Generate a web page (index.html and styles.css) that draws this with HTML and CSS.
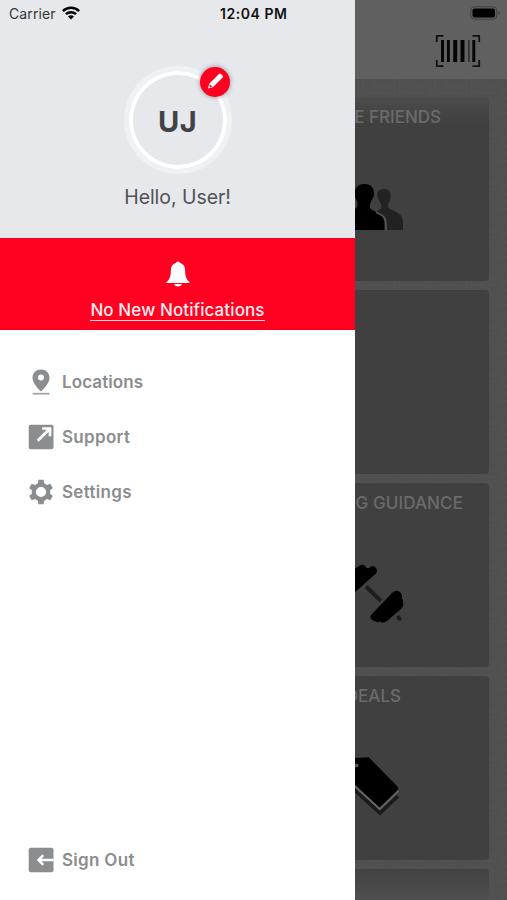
FILE: index.html
```
<!DOCTYPE html>
<html lang="en">
<head>
<meta charset="utf-8">
<title>Menu</title>
<link rel="stylesheet" href="styles.css">
</head>
<body>
<div class="app">
  <aside class="drawer">
    <header class="profile">
      <div class="status">
        <span class="carrier">Carrier</span>
        <svg class="wifi" width="18" height="14" viewBox="0 0 18 14"><g fill="none" stroke="#050505" stroke-width="2.5"><path d="M.9 5.1C5.3.7 12.7.7 17.1 5.1"/><path d="M3.9 8.2C6.8 5.5 11.2 5.5 14.1 8.2"/></g><path d="M6 10.4C7.7 8.9 10.3 8.9 12 10.4L9 13.5Z" fill="#050505"/></svg>
        <span class="clock">12:04 PM</span>
      </div>
      <div class="avatar">
        <span class="initials">UJ</span>
        <span class="edit"><svg width="30" height="30" viewBox="0 0 30 30"><path fill="#fff" d="M8 21.5L9.2 16.8L19 7Q20 6 21 7L22.8 8.8Q23.6 9.7 22.7 10.6L12.8 20.2Z"/><path d="M9.8 17.3L12.3 19.8L10.2 20.3L9.3 19.4Z" fill="#ff0020"/></svg></span>
      </div>
      <p class="hello">Hello, User!</p>
    </header>
    <section class="notice">
      <svg width="24" height="26" viewBox="0 0 24 26"><path fill="#fff" d="M12 .4Q13.8.4 14.2 2.1C18 3.2 19 6 19.1 9.5C19.2 15.5 20.3 18.1 23.7 21.4V22H.3V21.4C3.7 18.1 4.800 15.5 4.900 9.500C5 6 6 3.200 9.800 2.100Q10.200.4 12 .4ZM8 23H16Q15 25.500 12 25.500Q9 25.500 8 23Z"/></svg>
      <a class="noticeLink">No New Notifications</a>
    </section>
    <nav class="menu">
      <a class="item"><svg width="26" height="26" viewBox="0 0 26 26"><path fill="#8b8d8e" fill-rule="evenodd" d="M13 .5C17.8.5 21.500 4 21.500 8.700C21.500 14 16.500 19 13 22.500C9.500 19 4.500 14 4.500 8.700C4.500 4 8.200.5 13 .5ZM13 5.500A3 3 0 1 0 13 11.500A3 3 0 1 0 13 5.500Z"/><path d="M4.700 24.700H21.500" stroke="#a0a2a3" stroke-width="1.700"/></svg><span class="loc">Locations</span></a>
      <a class="item"><svg width="26" height="26" viewBox="0 0 26 26"><rect x=".7" y=".7" width="24.800" height="24.600" rx="2" fill="#8b8d8e"/><path d="M9.700 16.800L21.500 5M14.200 4.500H22V12.300" fill="none" stroke="#fff" stroke-width="2.700"/></svg><span class="sup">Support</span></a>
      <a class="item"><svg width="26" height="26" viewBox="0 0 26 26"><g fill="#8b8d8e"><path id="tooth" d="M9.500 6L10.500.8H15.500L16.500 6Z"/><use href="#tooth" transform="rotate(60 13 13)"/><use href="#tooth" transform="rotate(120 13 13)"/><use href="#tooth" transform="rotate(180 13 13)"/><use href="#tooth" transform="rotate(240 13 13)"/><use href="#tooth" transform="rotate(300 13 13)"/></g><circle cx="13" cy="13" r="7.200" fill="#fff" stroke="#8b8d8e" stroke-width="4.200"/></svg><span class="set">Settings</span></a>
      <a class="item signout"><svg width="26" height="26" viewBox="0 0 26 26"><rect x=".7" y=".7" width="24.800" height="24.600" rx="2" fill="#8b8d8e"/><path d="M25.500 13H11M15.300 8.200L10.500 13L15.300 17.800" fill="none" stroke="#fff" stroke-width="2.400"/></svg><span class="out">Sign Out</span></a>
    </nav>
  </aside>
  <main class="behind">
    <header class="topbar">
      <svg class="battery" width="31" height="14" viewBox="0 0 31 14"><rect x=".8" y=".8" width="26" height="12.400" rx="3.500" fill="none" stroke="#414141"/><rect x="2.500" y="2.500" width="22.500" height="9" rx="2" fill="#000"/><path d="M28.500 5Q31 7 28.500 9Z" fill="#414141"/></svg>
      <svg class="barcode" width="46" height="34" viewBox="0 0 46 34"><path d="M1.800 8V1.800H8.500M37.500 1.800H44.200V8M44.200 26V32.200H37.500M8.500 32.200H1.800V26" fill="none" stroke="#111" stroke-width="1.800"/><g fill="#050505"><path d="M6 6h3v22H6zM12 6h2.800v22H12zM18.200 6h4v22h-4zM25.500 6h4v22h-4zM37.300 6h3v22h-3z"/><path d="M33 6h1.800v22H33z" fill="#333"/></g></svg>
    </header>
    <div class="tiles">
      <svg class="texture" width="152" height="821"><defs><pattern id="grain" width="36" height="48" patternUnits="userSpaceOnUse"><path d="M3 0V13Q3 20 10 20H23Q30 20 30 28V48M8 0V9Q8 14 15 14H36M0 27H12Q20 27 20 35V48M0 34H8Q14 34 14 40V48M19 0V7H36M25 48V34Q25 27 19 26" fill="none" stroke="#595959" stroke-width="1"/></pattern></defs><rect width="152" height="821" fill="url(#grain)" opacity=".4"/></svg>
      <article class="tile first"><h2 class="friends">E FRIENDS</h2>
        <svg width="50" height="50" viewBox="0 0 50 50"><path fill="#222" d="M29 5C36 5 37.500 12 34 18C32 22 33 24 36 25.500C43 29 47.500 30 48 38V46H32Q32 34 27 31L22 27C28 24 27 22 25 18C20 11 22 5 29 5Z"/><path fill="#000" d="M9.500 0C19 0 21 9 17 16C14 21 14 24 17 26C23 29 29.500 30 29.500 40V46H-5V25H0Q4 23 2 17C-3 9 0 0 9.500 0Z"/><path d="M21 28.500C27 30.500 31 33 31 40V46" fill="none" stroke="#555" stroke-width="1.500"/></svg>
      </article>
      <article class="tile"></article>
      <article class="tile"><h2 class="guidance">G GUIDANCE</h2>
        <svg class="weights" width="50" height="64" viewBox="0 0 50 64"><path d="M11 24.500L26 39" stroke="#1d1d1d" stroke-width="4"/><path d="M41.500 54.500L44 53L47 56.500L45.500 59L42 57.500Z" fill="#1d1d1d"/><path d="M-2 8L4 4Q8 1 11 5Q12 7 14 6Q18 2 21 6Q23 9 20.500 12L-2 32ZM16 53L37 31Q41 27 45 30Q48 33 46.500 36Q49 38 48 41Q49 44 46 47L32 59Q28 62 25 59.500Q22 61 19 59Q14 57 16 53Z"/></svg>
      </article>
      <article class="tile"><h2 class="deals">DEALS</h2>
        <svg class="tags" width="50" height="62" viewBox="0 0 50 62"><path d="M-2 31.500L25 56L43 39" fill="none" stroke="#1a1a1a" stroke-width="3.500"/><path d="M-2 27.500L24.700 52L43.500 34" fill="none" stroke="#666" stroke-width="1.700"/><path d="M-2 1L13.700.3L42.500 29.500Q44 31.300 42.500 33L24.700 50.500L-2 26Z"/><path d="M-1 8.500H2" stroke="#555" stroke-width="3.500" stroke-linecap="round"/></svg>
      </article>
      <article class="tile last"></article>
    </div>
  </main>
</div>
</body>
</html>
```
FILE: styles.css
```
* { box-sizing: border-box; }
body { margin: 0; font-family: Inter, "Liberation Sans", sans-serif; }
svg { display: block; flex: none; }
.app { display: grid; grid-template-columns: 355px 152px; width: 507px; height: 900px; overflow: hidden; }
.drawer { display: flex; flex-direction: column; height: 900px; background: #fff; }
.profile { height: 238px; background: #e7e8eb; display: flex; flex-direction: column; align-items: center; }
.status { width: 100%; height: 28px; padding: 0 0 2px 9px; display: flex; align-items: center; font-size: 14px; color: #111; white-space: nowrap; }
.carrier { width: 47px; color: #333; letter-spacing: .1px; }
.wifi { margin: 0 0 0 6px; }
.clock { margin-left: 140px; font-weight: 600; letter-spacing: .55px; }
.avatar { position: relative; width: 108px; height: 108px; margin-top: 38px; border: 5px solid #f0f1f3; border-radius: 50%; display: flex; align-items: center; justify-content: center; box-shadow: inset 0 0 0 4px #fff; }
.initials { font-size: 29px; font-weight: 700; color: #414346; letter-spacing: .3px; padding-top: 2px; }
.edit { position: absolute; top: -4px; left: 71px; width: 30px; height: 30px; border-radius: 50%; background: #ff0020; box-shadow: 0 0 5px rgba(0,0,0,.4); }
.hello { margin: 11px 0 0; font-size: 19.5px; line-height: 25px; color: #505255; letter-spacing: -.05px; }
.notice { height: 92px; background: #ff0020; padding-top: 23px; display: flex; flex-direction: column; align-items: center; }
.noticeLink { margin-top: 13px; font-size: 17px; line-height: 20px; font-weight: 500; letter-spacing: .1px; color: #ffecef; border-bottom: 1px solid #ffd7dc; height: 21px; }
.menu { flex: 1; display: flex; flex-direction: column; gap: 29px; padding: 39px 28px 27px; }
.item { display: flex; align-items: center; height: 26px; gap: 8px; font-size: 17px; font-weight: 600; color: #8b8d8e; }
.loc { letter-spacing: .1px; }
.sup, .set, .out { letter-spacing: .3px; }
.signout { margin-top: auto; }
.behind { height: 900px; overflow: hidden; background: #505050; }
.topbar { height: 79px; background: #606060; display: flex; flex-direction: column; align-items: flex-end; padding: 6px 6px 0 0; }
.barcode { margin: 14px 20px 0 0; }
.tiles { position: relative; height: 821px; padding: 18px 18px 0 0; display: flex; flex-direction: column; gap: 9px; }
.texture { position: absolute; top: 0; left: 0; }
.tile { position: relative; flex: none; height: 184px; background: #404040; border-radius: 0 4px 4px 0; padding-top: 10px; overflow: hidden; }
.first { background: linear-gradient(#4c4c4c, #404040 26px); }
.last { background: linear-gradient(#424242, #505050 34px); }
.tile h2 { margin: 0; display: flex; justify-content: flex-end; font-size: 17px; line-height: 20px; font-weight: 500; color: #6b6b6b; white-space: nowrap; }
.tile .friends { padding-right: 48px; }
.tile .guidance { padding-right: 26px; letter-spacing: .1px; }
.tile .deals { padding-right: 88px; }
.tile svg { margin-top: 57px; }
.tile .weights { margin-top: 49px; }
.tile .tags { margin-top: 51px; }
```
